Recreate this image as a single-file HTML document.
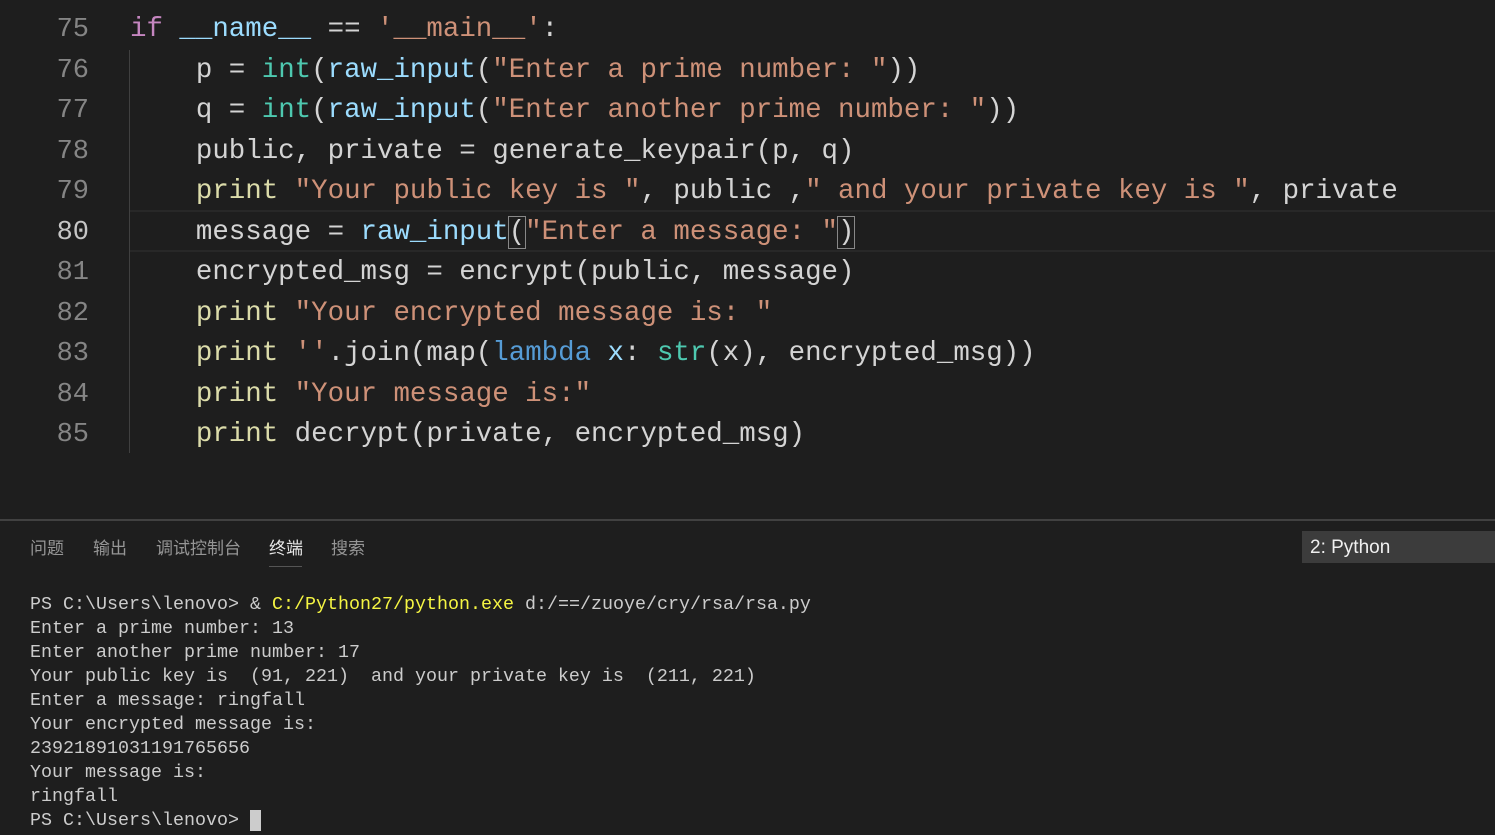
<!DOCTYPE html>
<html><head><meta charset="utf-8"><style>
body{margin:0;width:1495px;height:835px;background:#1e1e1e;overflow:hidden;position:relative;font-family:"Liberation Mono",monospace}
.ln{position:absolute;left:0;width:89px;text-align:right;color:#858585;font-size:27px;line-height:40.5px}
.cl{position:absolute;left:130px;color:#d4d4d4;font-size:27.45px;line-height:40.5px;white-space:pre}
.k{color:#c586c0}.v{color:#9cdcfe}.s{color:#ce9178}.f{color:#dcdcaa}.t{color:#4ec9b0}.b{color:#569cd6}
.term{position:absolute;left:30px;top:593px;color:#cccccc;font-size:18.33px;line-height:24px;white-space:pre}
.tab{position:absolute;top:534px;font-family:"Liberation Sans","Noto Sans CJK SC",sans-serif;font-size:17px;color:#969696}
</style></head><body>
<div style="position:absolute;left:130px;top:210px;width:1365px;height:38px;border-top:2px solid #282828;border-bottom:2px solid #282828"></div>
<div style="position:absolute;left:129px;top:50px;width:1px;height:403px;background:#404040"></div>
<div class="ln" style="top:10px">75</div><div class="ln" style="top:50.5px">76</div><div class="ln" style="top:91px">77</div><div class="ln" style="top:131.5px">78</div><div class="ln" style="top:172px">79</div><div class="ln" style="top:212.5px;color:#c6c6c6">80</div><div class="ln" style="top:253px">81</div><div class="ln" style="top:293.5px">82</div><div class="ln" style="top:334px">83</div><div class="ln" style="top:374.5px">84</div><div class="ln" style="top:415px">85</div>
<div class="cl" style="top:10px"><span class="k">if</span> <span class="v">__name__</span> == <span class="s">'__main__'</span>:</div>
<div class="cl" style="top:50.5px">    p = <span class="t">int</span>(<span class="v">raw_input</span>(<span class="s">"Enter a prime number: "</span>))</div>
<div class="cl" style="top:91px">    q = <span class="t">int</span>(<span class="v">raw_input</span>(<span class="s">"Enter another prime number: "</span>))</div>
<div class="cl" style="top:131.5px">    public, private = generate_keypair(p, q)</div>
<div class="cl" style="top:172px">    <span class="f">print</span> <span class="s">"Your public key is "</span>, public ,<span class="s">" and your private key is "</span>, private</div>
<div class="cl" style="top:212.5px">    message = <span class="v">raw_input</span><span style="outline:1px solid #888">(</span><span class="s">"Enter a message: "</span><span style="outline:1px solid #888">)</span></div>
<div class="cl" style="top:253px">    encrypted_msg = encrypt(public, message)</div>
<div class="cl" style="top:293.5px">    <span class="f">print</span> <span class="s">"Your encrypted message is: "</span></div>
<div class="cl" style="top:334px">    <span class="f">print</span> <span class="s">''</span>.join(map(<span class="b">lambda</span> <span class="v">x</span>: <span class="t">str</span>(x), encrypted_msg))</div>
<div class="cl" style="top:374.5px">    <span class="f">print</span> <span class="s">"Your message is:"</span></div>
<div class="cl" style="top:415px">    <span class="f">print</span> decrypt(private, encrypted_msg)</div>
<div style="position:absolute;left:0;top:519px;width:1495px;height:2px;background:#414141"></div>
<div class="tab" style="left:30px">问题</div><div class="tab" style="left:93px">输出</div><div class="tab" style="left:156px">调试控制台</div><div class="tab" style="left:269px;color:#e7e7e7">终端</div><div class="tab" style="left:331px">搜索</div>
<div style="position:absolute;left:269px;top:566px;width:33px;height:1px;background:#555"></div>
<div style="position:absolute;left:1302px;top:531px;width:193px;height:32px;background:#3c3c3c;color:#f0f0f0;font-family:'Liberation Sans',sans-serif;font-size:19px;line-height:34px;padding-left:8px;box-sizing:border-box">2: Python</div>
<div class="term">PS C:\Users\lenovo&gt; &amp; <span style="color:#f5f543">C:/Python27/python.exe</span> d:/==/zuoye/cry/rsa/rsa.py
Enter a prime number: 13
Enter another prime number: 17
Your public key is  (91, 221)  and your private key is  (211, 221)
Enter a message: ringfall
Your encrypted message is:
23921891031191765656
Your message is:
ringfall
PS C:\Users\lenovo&gt; <span style="background:#ccc"> </span></div>
</body></html>
